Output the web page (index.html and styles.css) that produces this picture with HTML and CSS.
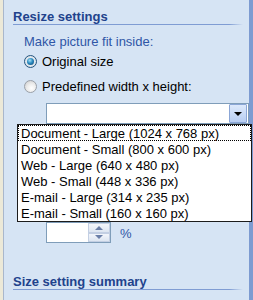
FILE: index.html
```html
<!DOCTYPE html>
<html lang="en">

<head>
    <meta charset="UTF-8">
    <title>Resize settings</title>
    <link rel="stylesheet" href="styles.css">
</head>

<body>
    <div class="panel">
        <h2 class="section">Resize settings</h2>
        <div class="hint">Make picture fit inside:</div>
        <div class="option">
            <span class="radio checked"></span>
            <span>Original size</span>
        </div>
        <div class="option">
            <span class="radio"></span>
            <span>Predefined width x height:</span>
        </div>
        <div class="combo">
            <span class="combo-value"></span>
            <span class="combo-btn"><span class="arrow"></span></span>
        </div>
        <div class="spin-row">
            <div class="spin">
                <span class="spin-value"></span>
                <span class="spin-btns">
                    <span class="spin-up"></span>
                    <span class="spin-down"></span>
                </span>
            </div>
            <span class="unit">%</span>
        </div>
        <h2 class="section summary">Size setting summary</h2>

        <ul class="dropdown">
            <li class="focused">Document - Large (1024 x 768 px)</li>
            <li>Document - Small (800 x 600 px)</li>
            <li>Web - Large (640 x 480 px)</li>
            <li>Web - Small (448 x 336 px)</li>
            <li>E-mail - Large (314 x 235 px)</li>
            <li>E-mail - Small (160 x 160 px)</li>
        </ul>
    </div>
</body>

</html>
```

FILE: styles.css
```css
/* Base */
* {
    box-sizing: border-box;
}

body {
    margin: 0;
    height: 300px;
    overflow: hidden;
    background: #ece9d8;
    display: flex;
    font-family: "Liberation Sans", Arial, sans-serif;
    font-size: 13px;
}

.panel {
    position: relative;
    flex: 1;
    margin-left: 3px;
    border-left: 1px solid #a9b7cc;
    border-right: 4px solid #7d9bd1;
    background: #d6e4f4;
    padding: 9px 0 0 9px;
}

/* Section titles */
.section {
    position: relative;
    margin: 0 6px 0 0;
    height: 16px;
    font-size: 13px;
    font-weight: bold;
    line-height: 16px;
    color: #21428c;
}

.section::after {
    content: "";
    position: absolute;
    left: 0;
    right: 0;
    bottom: 0;
    height: 1px;
    background: linear-gradient(to right, #7f9cd3 94%, rgba(127, 156, 211, 0));
}

.summary {
    margin-top: 31px;
}

.hint {
    margin: 10px 0 0 11px;
    height: 14px;
    line-height: 14px;
    color: #2f56a6;
}

.option {
    display: flex;
    align-items: center;
    gap: 5px;
    margin-left: 11px;
    height: 25px;
    color: #000;
}

/* Radio buttons */
.radio {
    width: 13px;
    height: 13px;
    border: 1px solid #9aa0a8;
    border-radius: 50%;
    background: radial-gradient(circle at 60% 65%, #ffffff 0%, #ececec 45%, #c8c8c8 100%);
    position: relative;
}

.radio.checked {
    border-color: #24547e;
    background: radial-gradient(circle at 50% 50%, #f4f7fa 0%, #dbe3ea 70%, #b8c5d2 100%);
}

.radio.checked::after {
    content: "";
    position: absolute;
    left: 2px;
    top: 2px;
    width: 7px;
    height: 7px;
    border-radius: 50%;
    background: radial-gradient(circle at 40% 35%, #a6e0f5 0%, #2b8bc0 45%, #0c3f6b 100%);
}

/* Combo box */
.combo {
    display: flex;
    margin: 4px 0 0 33px;
    height: 21px;
    border: 1px solid #7f9db9;
    background: #fff;
    padding-right: 1px;
}

.combo-value {
    flex: 1;
}

.combo-btn {
    width: 18px;
    border: 1px solid #8ba6d6;
    border-radius: 1px;
    background: linear-gradient(#dde9fb, #b7cdf2);
    display: flex;
    align-items: center;
    justify-content: center;
}

.arrow {
    width: 0;
    height: 0;
    border-left: 4px solid transparent;
    border-right: 4px solid transparent;
    border-top: 4px solid #000;
}

/* Spin box */
.spin-row {
    display: flex;
    align-items: center;
    gap: 9px;
    margin: 98px 0 0 33px;
}

.spin {
    display: flex;
    width: 65px;
    height: 21px;
    border: 1px solid #7f9db9;
    background: #fff;
}

.spin-value {
    flex: 1;
}

.spin-btns {
    width: 22px;
    display: flex;
    flex-direction: column;
}

.spin-up,
.spin-down {
    flex: 1;
    border: 1px solid #c3cfe3;
    background: linear-gradient(#f3f6fb, #dde5f1);
    display: flex;
    align-items: center;
    justify-content: center;
}

.spin-up::after,
.spin-down::after {
    content: "";
    border-left: 4px solid transparent;
    border-right: 4px solid transparent;
}

.spin-up::after {
    border-bottom: 4px solid #6b7fa8;
}

.spin-down::after {
    border-top: 4px solid #6b7fa8;
}

.unit {
    color: #2f56a6;
    margin-top: 2px;
}

/* Open drop-down list */
.dropdown {
    position: absolute;
    left: 13px;
    top: 124px;
    width: 235px;
    margin: 0;
    padding: 0;
    list-style: none;
    background: #fff;
    border: 1px solid #1c1c1c;
    z-index: 5;
}

.dropdown li {
    height: 16px;
    line-height: 13px;
    padding: 1px 0 0 2px;
    white-space: nowrap;
    color: #000;
    border: 1px solid transparent;
}

.dropdown li.focused {
    border: 1px dotted #000;
}
```
